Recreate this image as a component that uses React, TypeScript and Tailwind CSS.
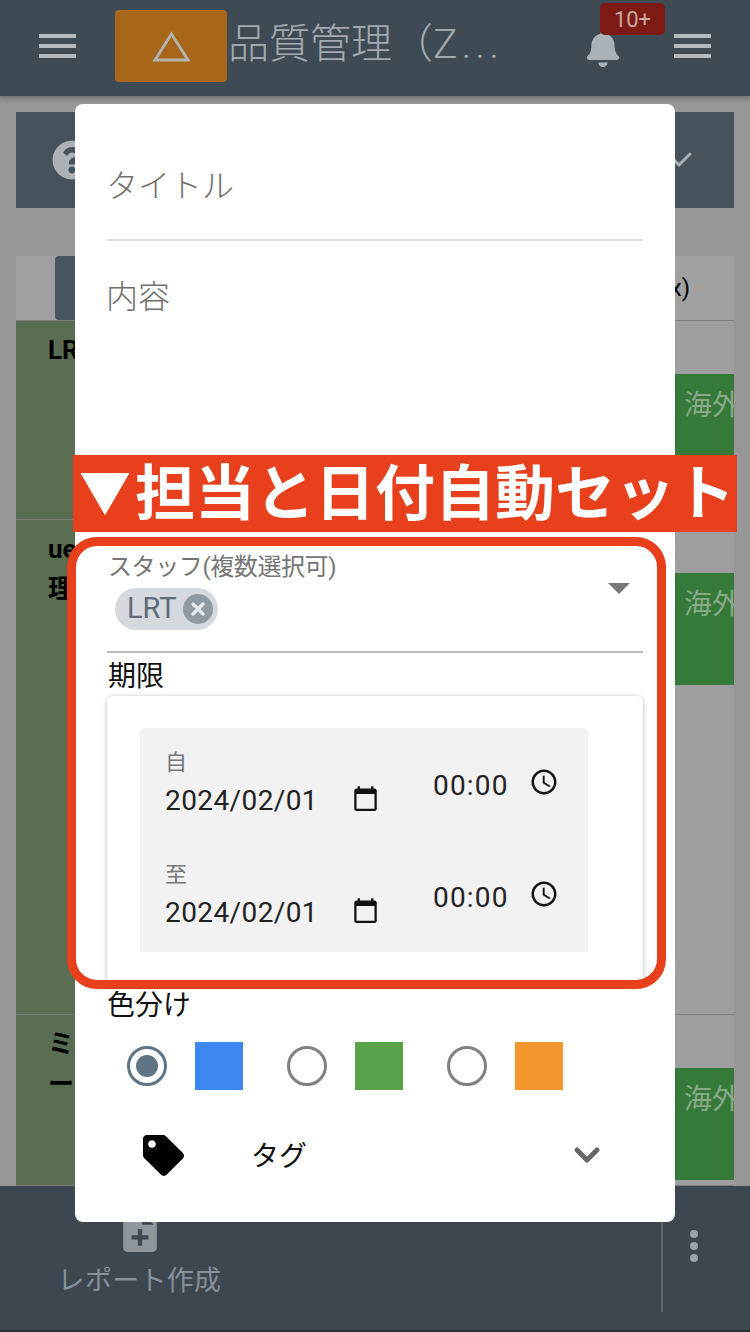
import React from 'react';
import { Check, ChevronDown, X } from 'lucide-react';
import { FaBell, FaQuestionCircle, FaTag } from 'react-icons/fa';

const jp = { fontFamily: 'Roboto, "Noto Sans CJK JP", sans-serif' };

function Burger() {
  return (
    <div className="flex w-[37px] shrink-0 flex-col gap-[6px]">
      <div className="h-[4px] bg-[#b4bbc0]" />
      <div className="h-[4px] bg-[#b4bbc0]" />
      <div className="h-[4px] bg-[#b4bbc0]" />
    </div>
  );
}

function CalendarIcon() {
  return (
    <svg viewBox="0 0 24 24" className="mb-[6px] h-[27px] w-[27px] fill-[#111]">
      <path d="M20 3h-1V1h-2v2H7V1H5v2H4c-1.1 0-2 .9-2 2v16c0 1.1.9 2 2 2h16c1.1 0 2-.9 2-2V5c0-1.1-.9-2-2-2zm0 18H4V8h16v13z" />
    </svg>
  );
}

function ClockIcon() {
  return (
    <svg viewBox="0 0 24 24" className="mt-[-2px] h-[30px] w-[30px] fill-[#111]">
      <path d="M11.99 2C6.47 2 2 6.48 2 12s4.47 10 9.99 10C17.52 22 22 17.52 22 12S17.52 2 11.99 2zM12 20c-4.42 0-8-3.58-8-8s3.58-8 8-8 8 3.58 8 8-3.58 8-8 8z" />
      <path d="M12.5 7H11v6l5.25 3.15.75-1.23-4.5-2.67z" />
    </svg>
  );
}

function DateRow({ label }: { label: string }) {
  return (
    <div className="flex h-[112px]">
      <div className="w-[267px] pl-[25px] pt-[21px]">
        <div className="text-[22px] leading-[28px] text-[#777]">{label}</div>
        <div className="mt-[7px] flex items-center justify-between pr-[28px]">
          <span className="text-[28px] leading-[34px] tracking-[0.4px] text-[#222]">2024/02/01</span>
          <CalendarIcon />
        </div>
      </div>
      <div className="flex flex-1 items-start pl-[26px] pt-[41px]">
        <span className="w-[96px] text-[28px] leading-[34px] tracking-[1.2px] text-[#222]">00:00</span>
        <ClockIcon />
      </div>
    </div>
  );
}

function ColorOption({ color, checked }: { color: string; checked?: boolean }) {
  return (
    <div className="flex w-[160px] items-center">
      <div
        className={
          checked
            ? 'flex h-[40px] w-[40px] items-center justify-center rounded-full border-[3px] border-[#5f7585]'
            : 'flex h-[40px] w-[40px] items-center justify-center rounded-full border-[3px] border-[#808080]'
        }
      >
        {checked && <div className="h-[22px] w-[22px] rounded-full bg-[#5f7585]" />}
      </div>
      <div className={`ml-[28px] h-[48px] w-[48px] ${color}`} />
    </div>
  );
}

function TableRow({ height, children }: { height: string; children: React.ReactNode }) {
  return (
    <div className={`flex border-b border-[#7f7f7f] ${height}`}>
      <div className="w-[200px] bg-[#586d51] pl-[32px] pt-[9px] text-[26px] font-bold leading-[40px] text-black">{children}</div>
      <div className="flex-1 bg-[#9e9e9e]" />
      <div className="w-[59px] bg-[#9e9e9e] pt-[53px]">
        <div className="h-[112px] overflow-hidden whitespace-nowrap bg-[#357a38] pl-[9px] pt-[12px] text-[28px] leading-[40px] text-[#8aa98b]">海外</div>
      </div>
    </div>
  );
}

export default function App() {
  return (
    <div className="relative h-[1332px] w-full overflow-hidden bg-[#979797]" style={jp}>
      {/* 背景の画面 */}
      <div className="flex h-full flex-col">
        <header className="relative flex h-[96px] shrink-0 items-center bg-[#3e4a54] pb-[4px] pl-[39px] pr-[39px] shadow-[0_2px_6px_rgba(0,0,0,0.3)]">
          <Burger />
          <div className="ml-[39px] mt-[10px] flex h-[72px] w-[112px] shrink-0 items-center justify-center self-start rounded-[4px] bg-[#a8661a]">
            <svg viewBox="0 0 40 32" className="h-[31px] w-[39px] fill-none stroke-[#b4b4ae] stroke-[3px]">
              <path d="M20 3 L37 30 H3 Z" />
            </svg>
          </div>
          <div className="ml-[1px] mb-[4px] w-[358px] shrink-0 whitespace-nowrap text-[41px] font-light leading-[46px] text-[#a2aab0]">
            品質管理（<span className="tracking-[4px]">Z...</span>
          </div>
          <div className="relative mt-[30px] h-[38px] w-[34px] shrink-0 self-start">
            <FaBell className="h-[37px] w-[34px] text-[#aab1b7]" />
            <div className="absolute left-[14px] top-[-27px] flex h-[32px] w-[65px] items-center justify-center rounded-[5px] bg-[#7d1a14] text-[22px] text-[#c6a8a5]">10+</div>
          </div>
          <div className="ml-auto">
            <Burger />
          </div>
        </header>

        <div className="flex min-h-0 flex-1 flex-col px-[16px] pt-[16px]">
          <div className="flex h-[96px] shrink-0 items-center justify-between bg-[#47535c] pl-[36px] pr-[40px]">
            <FaQuestionCircle className="h-[40px] w-[40px] text-[#aeb1b3]" />
            <Check className="h-[24px] w-[24px] text-[#aab1b7]" strokeWidth={3} />
          </div>

          <div className="mt-[48px] flex min-h-0 flex-1 flex-col overflow-hidden">
            <div className="flex h-[65px] shrink-0 items-center justify-between border-b border-[#7f7f7f] bg-[#a0a0a0]">
              <div className="ml-[39px] h-[64px] w-[100px] rounded-[4px] bg-[#47555f]" />
              <span className="pr-[44px] text-[24px] text-black">x)</span>
            </div>
            <TableRow height="h-[199px] shrink-0">LRT</TableRow>
            <TableRow height="h-[495px] shrink-0">
              ue
              <br />
              理
            </TableRow>
            <TableRow height="flex-1">
              ミ
              <br />ー
            </TableRow>
          </div>
        </div>

        <footer className="flex h-[146px] shrink-0 border-b-2 border-[#2c343a] bg-[#3c4750]">
          <div className="flex w-[279px] flex-col items-center pt-[24px]">
            <svg viewBox="4 2 16 20" className="h-[42px] w-[34px] fill-[#8f979d]">
              <path d="M14 2H6c-1.1 0-1.99.9-1.99 2L4 20c0 1.1.89 2 1.99 2H18c1.1 0 2-.9 2-2V8l-6-6zm2 14h-3v3h-2v-3H8v-2h3v-3h2v3h3v2zm-3-7V3.5L18.5 9H13z" />
            </svg>
            <div className="mt-[9px] text-[27px] leading-[40px] tracking-[0.3px] text-[#87919a]">レポート作成</div>
          </div>
          <div className="ml-auto mb-[18px] mt-[36px] w-[2px] bg-[#5d6a74]" />
          <div className="flex w-[87px] flex-col items-center justify-center gap-[4px] pb-[25px] pr-[26px]">
            <div className="h-[8px] w-[8px] rounded-full bg-[#99a3ad]" />
            <div className="h-[8px] w-[8px] rounded-full bg-[#99a3ad]" />
            <div className="h-[8px] w-[8px] rounded-full bg-[#99a3ad]" />
          </div>
        </footer>
      </div>

      {/* モーダル */}
      <div className="absolute left-[75px] top-[104px] h-[1118px] w-[600px] rounded-[8px] bg-white px-[32px]">
        <div className="flex h-[137px] items-end border-b-2 border-[#dcdcdc] pb-[29px] text-[32px] font-light leading-[48px] text-[#707070]">
          <span className="ml-[-1px]">タイトル</span>
        </div>
        <div className="ml-[-1px] mt-[32px] h-[276px] text-[32px] font-light leading-[48px] text-[#707070]">内容</div>

        <div className="relative h-[104px] border-b-2 border-[#bbbbbb]">
          <div className="ml-[1px] text-[24px] leading-[36px] tracking-[-0.4px] text-[#757575]">スタッフ(複数選択可)</div>
          <div className="ml-[8px] mt-[3px] flex h-[42px] w-[103px] items-center rounded-full bg-[#d5d8dc] pl-[12px]">
            <span className="text-[29px] text-[#5c6b77]">LRT</span>
            <div className="ml-[6px] flex h-[30px] w-[30px] items-center justify-center rounded-full bg-[#8f9aa4]">
              <X className="h-[20px] w-[20px] text-[#e6e9ec]" strokeWidth={4} />
            </div>
          </div>
          <div className="absolute right-[13px] top-[34px] h-0 w-0 border-x-[11px] border-t-[11px] border-x-transparent border-t-[#777]" />
        </div>

        <div className="ml-[1px] mt-[6px] text-[28px] leading-[36px] text-[#111]">期限</div>
        <div className="mt-[1px] h-[288px] w-[536px] rounded-[6px] bg-white px-[33px] pt-[32px] shadow-[0_1px_5px_rgba(0,0,0,0.3)]">
          <div className="w-[448px] rounded-t-[5px] bg-[#f2f2f2]">
            <DateRow label="自" />
            <DateRow label="至" />
          </div>
        </div>

        <div className="mt-[4px] text-[28px] leading-[36px] text-[#111]">色分け</div>
        <div className="ml-[20px] mt-[18px] flex">
          <ColorOption color="bg-[#3d88ee]" checked />
          <ColorOption color="bg-[#5aa24c]" />
          <ColorOption color="bg-[#f2962d]" />
        </div>
        <div className="mt-[40px] flex items-center">
          <FaTag className="ml-[36px] h-[41px] w-[41px] text-black" />
          <span className="ml-[67px] mt-[4px] text-[28px] leading-[46px] text-[#111]">タグ</span>
          <ChevronDown className="ml-auto mr-[36px] h-[40px] w-[40px] text-[#666]" strokeWidth={3} />
        </div>
      </div>

      {/* 注釈 */}
      <div className="absolute left-[67px] top-[537px] h-[452px] w-[599px] rounded-[30px] border-[9px] border-[#e8401c]" />
      <div className="absolute left-[73px] top-[455px] flex h-[77px] w-[664px] items-center whitespace-nowrap bg-[#e8401c] pl-[2px] pt-[2px] text-[60px] font-bold leading-none text-white">
        <span className="inline-block w-[60px] text-center text-[52px]">▼</span>担当と日付自動セット
      </div>
    </div>
  );
}
